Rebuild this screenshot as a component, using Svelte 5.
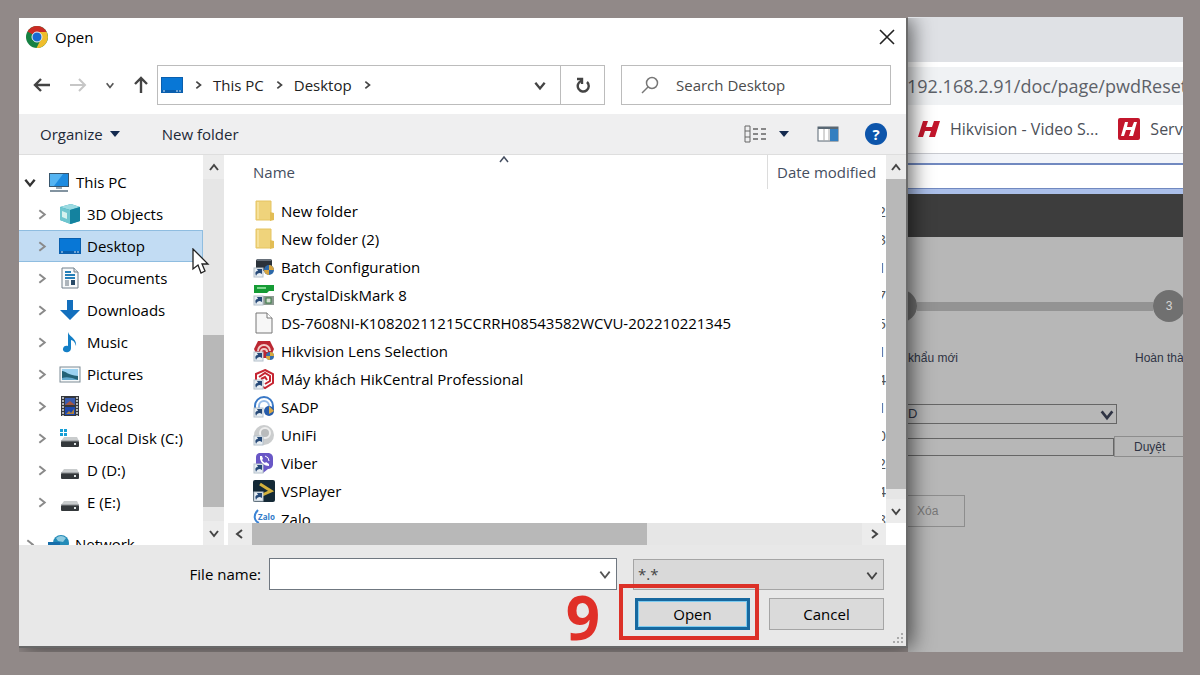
<script>
  let fileName = $state('');
  let filter = $state('*.*');
  let selected = $state('Desktop');

  const places = [
    { label: '3D Objects', icon: 'cube' },
    { label: 'Desktop', icon: 'desktop' },
    { label: 'Documents', icon: 'document' },
    { label: 'Downloads', icon: 'download' },
    { label: 'Music', icon: 'music' },
    { label: 'Pictures', icon: 'picture' },
    { label: 'Videos', icon: 'video' },
    { label: 'Local Disk (C:)', icon: 'system' },
    { label: 'D (D:)', icon: 'drive' },
    { label: 'E (E:)', icon: 'drive' }
  ];

  const files = [
    { name: 'New folder', icon: 'folder', date: '2' },
    { name: 'New folder (2)', icon: 'folder', date: '3' },
    { name: 'Batch Configuration', icon: 'batch', date: '1', link: true },
    { name: 'CrystalDiskMark 8', icon: 'crystal', date: '7', link: true },
    { name: 'DS-7608NI-K10820211215CCRRH08543582WCVU-202210221345', icon: 'file', date: '5' },
    { name: 'Hikvision Lens Selection', icon: 'lens', date: '1', link: true },
    { name: 'Máy khách HikCentral Professional', icon: 'central', date: '4', link: true },
    { name: 'SADP', icon: 'sadp', date: '1', link: true },
    { name: 'UniFi', icon: 'unifi', date: '0', link: true },
    { name: 'Viber', icon: 'viber', date: '2', link: true },
    { name: 'VSPlayer', icon: 'vsplayer', date: '4', link: true },
    { name: 'Zalo', icon: 'zalo', date: '8' }
  ];

  const chevrons = {
    up: 'M2 9 L6 4 L10 9',
    down: 'M2 4 L6 9 L10 4',
    left: 'M8 2 L3 6 L8 10',
    right: 'M4 2 L9 6 L4 10'
  };
</script>

{#snippet chevron(dir, size = 12, width = 2)}
  <svg class="chevron" width={size} height={size} viewBox="0 0 12 12" fill="none" stroke="currentColor" stroke-width={width} aria-hidden="true">
    <path d={chevrons[dir]} />
  </svg>
{/snippet}

{#snippet icon(name, link = false)}
  <svg class="icon" width="22" height="22" viewBox="0 0 22 22" aria-hidden="true">
    {#if name === 'pc'}
      <rect x="1" y="2" width="20" height="14" fill="#39566e" />
      <rect x="2" y="3" width="18" height="12" fill="#1d8be0" />
      <path d="M2 3 H15 L6 15 H2 Z" fill="#55b4f2" />
      <path d="M8 16 H14 V18 H8 Z" fill="#9aa9b5" />
      <path d="M2 19 H20 V21 H2 Z" fill="#8293a0" />
    {:else if name === 'cube'}
      <path d="M1 4 L12 1 L21 4 V18 L12 21 L1 17 Z" fill="#2aa3b8" />
      <path d="M1 4 L12 1 L21 4 L11 7 Z" fill="#9cdbe2" />
      <path d="M1 4 L11 7 V21 L1 17 Z" fill="#6fc6cf" />
      <path d="M3 8 L8 10 V16 L3 14 Z" fill="#d5f2ef" />
      <path d="M11 7 L21 4 V18 L11 21 Z" fill="#14829f" />
    {:else if name === 'desktop'}
      <rect y="3" width="22" height="16" fill="#0a5fae" />
      <rect x="1" y="4" width="20" height="12" fill="#0877d6" />
      <path d="M2 17 H4 M15 17 H17 M18 17 H20" stroke="#cfe6fa" />
    {:else if name === 'document'}
      <path d="M3 1 H15 L19 5 V21 H3 Z" fill="#f8fafb" stroke="#72808b" />
      <path d="M15 1 V5 H19" fill="#dce3e8" stroke="#72808b" />
      <path d="M6 5 H12 M6 8 H16 M6 11 H16" stroke="#247fb8" stroke-width="2" />
      <path d="M6 14 H10 M6 16 H10 M6 18 H10" stroke="#62717d" />
      <rect x="12" y="13" width="4" height="5" fill="#284a67" />
    {:else if name === 'download'}
      <path d="M8 1 H14 V11 H21 L11 21 L1 11 H8 Z" fill="#136fbd" />
    {:else if name === 'music'}
      <path d="M9 1 C10 6 18 7 17 15 C16 11 14 9 12 9 V17 C12 23 3 22 4 18 C4 15 7 14 9 15 Z" fill="#147fc6" />
    {:else if name === 'picture'}
      <rect x="1" y="4" width="20" height="15" fill="#f7f9fa" stroke="#7d8b95" />
      <rect x="3" y="6" width="16" height="11" fill="#9bd2f1" />
      <path d="M3 8 C7 8 8 12 19 13 V17 H3 Z" fill="#246276" />
      <path d="M3 15 Q10 13 19 17 H3 Z" fill="#63a9cd" />
    {:else if name === 'video'}
      <rect x="2" y="1" width="18" height="20" fill="#34373b" />
      <path d="M4 2 V21 M18 2 V21" stroke="#b4b7b9" stroke-width="2" stroke-dasharray="2 1" />
      <rect x="6" y="3" width="10" height="7" fill="#3a5caf" />
      <path d="M6 10 L11 6 L16 10 Z" fill="#a5553f" />
      <rect x="6" y="12" width="10" height="8" fill="#1d48ad" />
      <path d="M7 19 L10 16 L12 18 L15 14 V19 Z" fill="#b1813b" />
    {:else if name === 'system' || name === 'drive'}
      {#if name === 'system'}
        <path d="M1 2 H4 V5 H1 Z M5 2 H8 V5 H5 Z M1 6 H4 V9 H1 Z M5 6 H8 V9 H5 Z" fill="#169fd6" />
      {/if}
      <path d="M5 10 H18 L20 14 H2 Z" fill="#c9cccd" />
      <rect x="2" y="14" width="18" height="6" rx="1" fill="#34383b" />
      <path d="M2 14 H20" stroke="#85898c" />
      <rect x="15" y="16" width="2" height="2" fill="#dfe5e5" />
    {:else if name === 'network'}
      <circle cx="14" cy="10" r="8" fill="#238bb8" />
      <path d="M9 5 Q14 1 19 5 L16 9 L11 8 Z" fill="#8fcbe0" />
      <path d="M1 9 H13 V17 H1 Z" fill="#176eaa" />
    {:else if name === 'folder'}
      <path d="M3 1 H18 V20 H3 Z" fill="#efd37b" stroke="#e5c462" />
      <path d="M17 12 L21 13 V20 L17 21 Z" fill="#e2bd55" />
      <path d="M5 2 V19" stroke="#f6e19a" stroke-width="2" />
    {:else if name === 'file'}
      <path d="M3 1 H14 L19 6 V21 H3 Z" fill="#f7f7f7" stroke="#777" />
      <path d="M14 1 V6 H19" fill="#fff" stroke="#777" />
    {:else if name === 'batch'}
      <rect x="3" y="3" width="16" height="12" rx="2" fill="#2b323a" />
      <path d="M4 4 H18" stroke="#67707a" stroke-width="2" />
      <circle cx="16" cy="14" r="5" fill="#2c68a8" />
      <path d="M16 9 V14 H21 A5 5 0 0 0 16 9 M16 14 V19 A5 5 0 0 1 11 14 Z" fill="#d6a440" />
    {:else if name === 'crystal'}
      <path d="M1 1 H21 V7 H16 L14 9 H1 Z" fill="#159b35" />
      <path d="M4 4 H13" stroke="#7ed78e" stroke-width="2" />
      <rect x="1" y="12" width="20" height="9" fill="#8e9a92" />
      <rect x="13" y="14" width="5" height="5" fill="#d5dfd3" stroke="#377a43" />
    {:else if name === 'lens'}
      <path d="M5 1 H17 L21 9 L17 18 H5 L1 9 Z" fill="#bb2732" />
      <path d="M5 11 A6 6 0 0 1 17 11 M8 12 A3 3 0 0 1 14 12" fill="none" stroke="#f1cbc8" stroke-width="2" />
      <circle cx="17" cy="16" r="4" fill="#356dab" />
      <path d="M17 12 V16 H21 A4 4 0 0 0 17 12 M17 16 V20 A4 4 0 0 1 13 16 Z" fill="#d8aa3d" />
    {:else if name === 'central'}
      <path d="M12 2 L20 6 V15 L12 20 L3 15 V6 Z" fill="#fff" stroke="#c62532" stroke-width="2" />
      <path d="M6 9 L12 5 L17 8 V13 L12 16 M8 11 L12 9 L14 12" fill="none" stroke="#c62532" stroke-width="2" />
    {:else if name === 'sadp'}
      <path d="M2 15 V10 A9 9 0 0 1 20 10 V16" fill="none" stroke="#3978c6" stroke-width="2" />
      <path d="M6 15 V10 A5 5 0 0 1 16 10" fill="none" stroke="#98bce7" stroke-width="2" />
      <circle cx="16" cy="15" r="5" fill="#285caa" />
      <path d="M16 10 L21 15 L16 18 Z" fill="#dba944" />
    {:else if name === 'unifi'}
      <circle cx="11" cy="11" r="10" fill="#cbcdce" />
      <circle cx="12" cy="9" r="5" fill="#b9bbbc" stroke="#eee" stroke-width="2" />
    {:else if name === 'viber'}
      <path d="M6 1 H16 Q20 2 20 6 V13 Q19 17 15 17 L10 21 V17 H6 Q3 16 3 12 V5 Q3 2 6 1 Z" fill="#6957c6" />
      <path d="M7 4 H9 L10 7 L9 8 Q10 10 12 11 L13 10 L16 12 V14 Q9 14 7 7 Z" fill="#fff" />
      <path d="M12 4 Q16 5 16 9" fill="none" stroke="#fff" />
    {:else if name === 'vsplayer'}
      <rect width="22" height="22" rx="2" fill="#142936" />
      <path d="M7 4 L18 11 L7 16" fill="none" stroke="#d3b13c" stroke-width="3" />
    {:else if name === 'zalo'}
      <path d="M5 2 C0 7 1 13 6 15" fill="none" stroke="#3c84d5" stroke-width="2" />
      <text x="5" y="12" font-size="8" font-weight="700" fill="#347bc9">Zalo</text>
    {/if}
    {#if link}
      <rect x="1" y="12" width="9" height="9" fill="#e8eef3" stroke="#b4c0ca" />
      <path d="M3 20 Q1 15 5 15 L4 13 H9 V18 L7 17 Q4 17 3 20 Z" fill="#264977" />
    {/if}
  </svg>
{/snippet}

<main class="stage">
  <section class="dialog" aria-label="Open">
    <header class="title-bar">
      <svg width="22" height="22" viewBox="0 0 22 22" aria-hidden="true">
        <circle cx="11" cy="11" r="11" fill="#168143" />
        <path d="M11 11 L1.5 5.5 A11 11 0 0 1 20.5 5.5 Z" fill="#cb2b24" />
        <path d="M11 11 V6 H20.7 A11 11 0 0 1 10.5 22 L15 13 Z" fill="#efbd2c" />
        <circle cx="11" cy="11" r="5" fill="#1769d2" stroke="#e8eef6" />
      </svg>
      <h1>Open</h1>
      <button class="close" aria-label="Close">
        <svg width="16" height="16" viewBox="0 0 16 16" stroke="#222" stroke-width="1.6"><path d="M1 1 L15 15 M15 1 L1 15" /></svg>
      </button>
    </header>

    <nav class="nav-bar" aria-label="Location">
      <div class="arrows">
        <button aria-label="Back"><svg width="18" height="16" viewBox="0 0 18 16" fill="none" stroke="#444" stroke-width="2.4"><path d="M17 8 H2 M8 2 L2 8 L8 14" /></svg></button>
        <button aria-label="Forward"><svg width="18" height="16" viewBox="0 0 18 16" fill="none" stroke="#c6c6c6" stroke-width="2"><path d="M1 8 H16 M10 2 L16 8 L10 14" /></svg></button>
        <button class="recent" aria-label="Recent locations">{@render chevron('down', 10)}</button>
        <button aria-label="Up"><svg width="16" height="18" viewBox="0 0 16 18" fill="none" stroke="#444" stroke-width="2.4"><path d="M8 17 V2 M2 8 L8 2 L14 8" /></svg></button>
      </div>
      <div class="address">
        {@render icon('desktop')}
        {@render chevron('right', 10)}
        <a href="#this-pc">This PC</a>
        {@render chevron('right', 10)}
        <a href="#desktop">Desktop</a>
        {@render chevron('right', 10)}
        <button class="history" aria-label="Previous locations">{@render chevron('down', 14)}</button>
        <button class="refresh" aria-label="Refresh">
          <svg width="16" height="16" viewBox="0 0 16 16" fill="none" stroke="#444" stroke-width="2.4"><path d="M12 5 A5.5 5.5 0 1 1 6 4 M2 2 H7 V7" /></svg>
        </button>
      </div>
      <label class="search">
        <svg width="18" height="18" viewBox="0 0 18 18" fill="none" stroke="#777" stroke-width="1.5" aria-hidden="true"><circle cx="11" cy="7" r="5.5" /><path d="M7 11 L1 17" /></svg>
        <input type="text" placeholder="Search Desktop" aria-label="Search Desktop" />
      </label>
    </nav>

    <div class="toolbar">
      <button>Organize <svg width="10" height="6" viewBox="0 0 10 6"><path d="M0 0 H10 L5 6 Z" fill="#142a4f" /></svg></button>
      <button>New folder</button>
      <div class="view-tools">
        <button aria-label="Change view">
          <svg width="22" height="18" viewBox="0 0 22 18" fill="none" stroke="#666"><path d="M1 1 H6 V17 H1 Z M1 6 H6 M1 12 H6" /><path d="M9 4 H14 M17 4 H22 M9 9 H14 M17 9 H22 M9 14 H14 M17 14 H22" stroke-width="1.5" /></svg>
        </button>
        <button class="more" aria-label="More view options"><svg width="10" height="6" viewBox="0 0 10 6"><path d="M0 0 H10 L5 6 Z" fill="#142a4f" /></svg></button>
        <button class="preview" aria-label="Preview pane">
          <svg width="22" height="16" viewBox="0 0 22 16"><rect x="1" y="1" width="20" height="14" fill="#fff" stroke="#596773" /><path d="M1 2 H21" stroke="#596773" stroke-width="2" /><rect x="13" y="3" width="8" height="12" fill="#347fc0" /><path d="M7 3 V15 M12 3 V15" stroke="#aaa" /></svg>
        </button>
        <button class="help" aria-label="Help">?</button>
      </div>
    </div>

    <div class="panes">
      <div class="tree">
        <ul>
          <li class="root">
            <button>{@render chevron('down', 14)}{@render icon('pc')}<span>This PC</span></button>
          </li>
          {#each places as place (place.label)}
            <li class:selected={selected === place.label}>
              <button onclick={() => (selected = place.label)}>
                {@render chevron('right', 13, 1.8)}{@render icon(place.icon)}<span>{place.label}</span>
              </button>
              {#if place.label === 'Desktop'}
                <svg class="cursor" width="18" height="27" viewBox="0 0 18 27" aria-hidden="true"><path d="M1 1 V21 L6 17 L9 25 L13 23 L10 16 H16 Z" fill="#fff" stroke="#222" stroke-width="1.3" /></svg>
              {/if}
            </li>
          {/each}
          <li class="root network">
            <button>{@render chevron('right', 13, 1.8)}{@render icon('network')}<span>Network</span></button>
          </li>
        </ul>
      </div>
      <div class="scroll vertical tree-scroll">
        <button aria-label="Scroll tree up">{@render chevron('up')}</button>
        <i class="before"></i><i class="thumb"></i><i class="after"></i>
        <button aria-label="Scroll tree down">{@render chevron('down')}</button>
      </div>

      <div class="list">
        <table>
          <thead>
            <tr>
              <th class="name">Name<span class="sort">{@render chevron('up', 12, 1.5)}</span></th>
              <th class="date"><span>Date modified</span></th>
            </tr>
          </thead>
          <tbody>
            {#each files as file (file.name)}
              <tr>
                <td><div class="file">{@render icon(file.icon, file.link)}<span>{file.name}</span></div></td>
                <td><div class="stamp">{file.date}</div></td>
              </tr>
            {/each}
          </tbody>
        </table>
      </div>
      <div class="scroll vertical list-scroll">
        <button aria-label="Scroll list up">{@render chevron('up')}</button>
        <i class="thumb"></i><i class="after"></i>
        <button aria-label="Scroll list down">{@render chevron('down')}</button>
      </div>
      <div class="scroll horizontal">
        <button aria-label="Scroll list left">{@render chevron('left')}</button>
        <i class="thumb"></i><i class="after"></i>
        <button aria-label="Scroll list right">{@render chevron('right')}</button>
      </div>
    </div>

    <footer>
      <div class="fields">
        <label for="file-name">File name:</label>
        <div class="combo">
          <input id="file-name" type="text" bind:value={fileName} />
          <button aria-label="Recent file names">{@render chevron('down', 14, 1.5)}</button>
        </div>
        <div class="filter">
          <select aria-label="File type" bind:value={filter}>
            <option>*.*</option>
          </select>
          {@render chevron('down', 14, 1.5)}
        </div>
      </div>
      <div class="actions">
        <div class="marked">
          <button class="open">Open</button>
          <span class="step">9</span>
        </div>
        <button>Cancel</button>
      </div>
      <svg class="grip" width="12" height="12" viewBox="0 0 12 12" fill="#aaa" aria-hidden="true"><path d="M9 0 h2 v2 h-2 Z M9 4 h2 v2 h-2 Z M9 8 h2 v2 h-2 Z M5 4 h2 v2 h-2 Z M5 8 h2 v2 h-2 Z M1 8 h2 v2 h-2 Z" /></svg>
    </footer>
  </section>

  <section class="browser" aria-label="Browser">
    <div class="tabs"></div>
    <div class="url">192.168.2.91/doc/page/pwdReset</div>
    <div class="bookmarks">
      <a href="#hikvision">
        <svg width="22" height="16" viewBox="0 0 22 16" aria-hidden="true"><path d="M5 0 H10 L8 6 H14 L16 0 H22 L17 16 H11 L13 10 H7 L5 16 H0 Z" fill="#c3162c" /></svg>
        Hikvision - Video S...
      </a>
      <a href="#service">
        <svg width="22" height="22" viewBox="0 0 22 22" aria-hidden="true"><rect width="22" height="22" rx="2" fill="#c3162c" /><path d="M7 4 H10 L9 9 H14 L16 4 H19 L15 18 H11 L13 12 H8 L6 18 H3 Z" fill="#fff" /></svg>
        Servi
      </a>
    </div>
    <div class="notice"></div>
    <div class="site-head"></div>
    <div class="page">
      <div class="steps"><b>2</b><i></i><b>3</b></div>
      <div class="labels"><span>Mật khẩu mới</span><span>Hoàn thành</span></div>
      <form>
        <div class="mode">
          <select aria-label="Mode"><option>GUID</option></select>
          {@render chevron('down', 16)}
        </div>
        <div class="browse">
          <input type="text" aria-label="File path" />
          <button type="button">Duyệt</button>
        </div>
        <button class="clear" type="button">Xóa</button>
      </form>
    </div>
  </section>
</main>

<style>
  :global(body) { margin: 0; }
  * { box-sizing: border-box; }
  button, input, select { font: inherit; color: inherit; border-radius: 0; }
  button { background: none; border: 0; padding: 0; display: flex; align-items: center; cursor: pointer; }
  a { color: inherit; text-decoration: none; }
  svg { flex: none; display: block; }
  ul { list-style: none; margin: 0; padding: 0; }

  .stage {
    display: grid;
    grid-template-columns: 889fr 275fr;
    height: 100vh;
    min-height: 560px;
    padding: 17px 17px 23px 19px;
    background: #918988;
    overflow: hidden;
    font: 15px/20px "Open Sans", "Noto Sans", sans-serif;
    color: #000;
  }

  .dialog {
    position: relative;
    z-index: 1;
    display: flex;
    flex-direction: column;
    min-width: 0;
    min-height: 0;
    margin: 1px 0 4px;
    background: #fff;
    border-right: 2px solid #6b6b6b;
    border-bottom: 2px solid #686868;
    box-shadow: 4px 0 20px rgba(0, 0, 0, 0.6);
    clip-path: inset(0 -30px -4px 0);
  }
  .title-bar { display: flex; align-items: center; gap: 7px; height: 38px; padding: 0 11px 0 7px; }
  h1 { margin: 0; font-size: 15px; font-weight: 400; }
  .close { margin-left: auto; }

  .nav-bar { display: flex; align-items: center; height: 58px; padding: 0 15px 0 14px; color: #222; }
  .arrows { display: flex; align-items: center; justify-content: space-between; width: 116px; margin-right: 8px; }
  .recent { color: #555; }
  .address { flex: 1; display: flex; align-items: center; gap: 10px; height: 40px; padding-left: 3px; border: 1px solid #bcbcbc; }
  .address .chevron { color: #444; }
  .history { margin-left: auto; padding-right: 3px; }
  .refresh { width: 44px; height: 100%; justify-content: center; border-left: 1px solid #bcbcbc; }
  .search { display: flex; align-items: center; gap: 17px; width: 270px; height: 40px; margin-left: 16px; padding-left: 19px; border: 1px solid #bcbcbc; }
  .search input { flex: 1; min-width: 0; border: 0; outline: 0; padding: 0; }
  .search input::placeholder { color: #4c4c4c; opacity: 1; }

  .toolbar { display: flex; align-items: center; gap: 42px; height: 41px; padding: 0 19px 0 21px; background: #efeff0; border-bottom: 1px solid #dedede; color: #1d2937; }
  .toolbar button:first-child { gap: 7px; }
  .view-tools { display: flex; align-items: center; margin-left: auto; }
  .more { margin: 0 28px 0 13px; }
  .preview { margin-right: 26px; }
  .toolbar .help { width: 22px; height: 22px; justify-content: center; border-radius: 50%; background: #0d55ab; color: #fff; font-weight: 700; }

  .panes { flex: 1; min-height: 0; display: grid; grid-template-columns: 184px 21px 1fr 20px; grid-template-rows: minmax(0, 1fr) 22px; }
  .tree { grid-row: 1 / 3; min-height: 0; padding-top: 11px; z-index: 1; clip-path: inset(0 -10px 0 0); }
  .tree ul { height: 100%; }
  .tree li { position: relative; height: 32px; border: 1px solid transparent; border-left: 0; }
  .tree li.selected { background: #c2dcf3; border-color: #8fbde0; }
  .tree li button { width: 100%; height: 100%; gap: 6px; padding-left: 16px; white-space: nowrap; color: #8a8a8a; }
  .tree li button span { color: #000; }
  .tree li .chevron { margin-right: 5px; }
  .tree .root button { padding-left: 4px; color: #333; }
  .tree .network { margin-top: 10px; }
  .tree .network button { color: #8a8a8a; }
  .cursor { position: absolute; right: -8px; top: 17px; }

  .scroll { display: flex; background: #e6e6e6; color: #444; }
  .scroll button { flex: none; width: 24px; height: 24px; justify-content: center; background: #ececec; }
  .vertical { flex-direction: column; align-items: stretch; }
  .vertical button { width: 100%; }
  .horizontal button { height: 100%; }
  .thumb { background: #b8b8b8; }
  .tree-scroll { grid-row: 1 / 3; }
  .tree-scroll .before { flex: 157; }
  .tree-scroll .thumb { flex: 173; }
  .tree-scroll .after { flex: 14; }
  .list-scroll .thumb { flex: 311; }
  .list-scroll .after { flex: 10; }
  .horizontal { grid-column: 3; margin-left: 4px; }
  .horizontal .thumb { flex: 394; }
  .horizontal .after { flex: 215; }

  .list { min-width: 0; overflow: hidden; margin-left: 4px; }
  table { width: 100%; table-layout: fixed; border-collapse: collapse; }
  th { height: 42px; padding: 0; vertical-align: top; text-align: left; font-weight: 400; line-height: 34px; color: #454e60; white-space: nowrap; }
  .name { position: relative; padding-left: 25px; }
  .sort { position: absolute; left: 50%; top: -2px; }
  .date { width: 119px; }
  .date span { display: block; height: 34px; padding-left: 9px; border-left: 1px solid #dcdcdc; }
  td { height: 28px; padding: 0; white-space: nowrap; }
  .file { display: flex; align-items: center; gap: 6px; padding-left: 25px; }
  .stamp { display: flex; justify-content: flex-end; width: 4px; margin-left: auto; overflow: hidden; color: #555; }

  footer { position: relative; display: flex; flex-direction: column; gap: 8px; padding: 13px 22px 16px 0; background: #e8e8e8; }
  .fields { display: flex; align-items: center; }
  .fields label { width: 250px; padding-right: 8px; text-align: right; }
  .combo { flex: 1; display: flex; height: 32px; margin-right: 16px; background: #fff; border: 1px solid #6f7780; }
  .combo input { flex: 1; min-width: 0; border: 0; outline: 0; background: none; }
  .combo button { padding-right: 4px; color: #555; }
  .filter { position: relative; width: 251px; height: 31px; color: #444; }
  .filter select { width: 100%; height: 100%; padding: 0 4px; appearance: none; background: #d9d9d9; border: 1px solid #a5a5a5; }
  .filter .chevron { position: absolute; right: 5px; top: 9px; pointer-events: none; }
  .actions { display: flex; justify-content: flex-end; gap: 19px; }
  .actions button { width: 115px; height: 32px; justify-content: center; background: #dadada; border: 1px solid #a5a5a5; }
  .actions .open { border: 3px solid #17689f; box-shadow: inset 0 0 0 1px #7ccbf0; }
  .marked { position: relative; }
  .marked::after { content: ""; position: absolute; inset: -14px -9px -10px -16px; border: 4px solid #dc3128; pointer-events: none; }
  .step { position: absolute; right: 150px; top: -11px; font: 700 60px/60px "Open Sans", "Noto Sans", sans-serif; color: #e03028; }
  .grip { position: absolute; right: 2px; bottom: 1px; }

  /* the browser window runs on behind the dialog's right edge */
  .browser { display: flex; flex-direction: column; min-width: 0; min-height: 0; margin-left: -40px; overflow: hidden; background: #b7b7b7; clip-path: inset(0 0 0 40px); }
  .tabs { height: 45px; background: #dfe1e5; }
  .url { height: 43px; padding-left: 39px; border-top: 5px solid #fff; background: #f0f2f4; font-size: 18px; line-height: 39px; color: #5d6168; white-space: nowrap; }
  .bookmarks { display: flex; align-items: center; gap: 20px; height: 49px; padding-left: 50px; background: #fff; border-bottom: 1px solid #c8cad0; font-size: 16px; color: #4c5058; white-space: nowrap; }
  .bookmarks a { display: flex; align-items: center; gap: 10px; }
  .notice { height: 40px; background: #fff; border-top: 9px solid #f3f5f9; border-bottom: 5px solid #abbfe9; box-shadow: inset 0 2px #7189c0, inset 0 -1px #7189c0; }
  .site-head { height: 43px; background: #3d3d3d; }
  .page { flex: 1; padding-top: 53px; font: 12px/16px "Liberation Sans", Arial, sans-serif; color: #2f3444; }
  .steps { display: flex; align-items: center; padding-left: 17px; margin-right: -2px; }
  .steps i { flex: 1; height: 9px; background: #939393; }
  .steps b { display: grid; place-items: center; width: 32px; height: 32px; border-radius: 50%; background: #707070; color: #d5d5d5; font-weight: 400; }
  .labels { display: flex; justify-content: space-between; margin-top: 28px; white-space: nowrap; }
  .labels span:first-child { width: 90px; text-align: right; }
  .labels span:last-child { width: 48px; }
  .mode { position: relative; height: 20px; margin: 38px 66px 12px 12px; }
  .mode select { width: 100%; height: 100%; padding: 0 4px; appearance: none; background: #b7b7b7; border: 1px solid #666; font-size: 13px; }
  .mode .chevron { position: absolute; right: 2px; top: 2px; pointer-events: none; }
  .browse { display: flex; align-items: center; padding-left: 12px; }
  .browse input { flex: 1; min-width: 0; height: 18px; background: none; border: 1px solid #666; }
  .browse button { width: 69px; height: 21px; padding-left: 19px; border: 1px solid #8d8d8d; border-right: 0; }
  .clear { width: 85px; height: 32px; margin: 38px 0 0 12px; padding-left: 36px; border: 1px solid #8d8d8d; color: #777; }
</style>
